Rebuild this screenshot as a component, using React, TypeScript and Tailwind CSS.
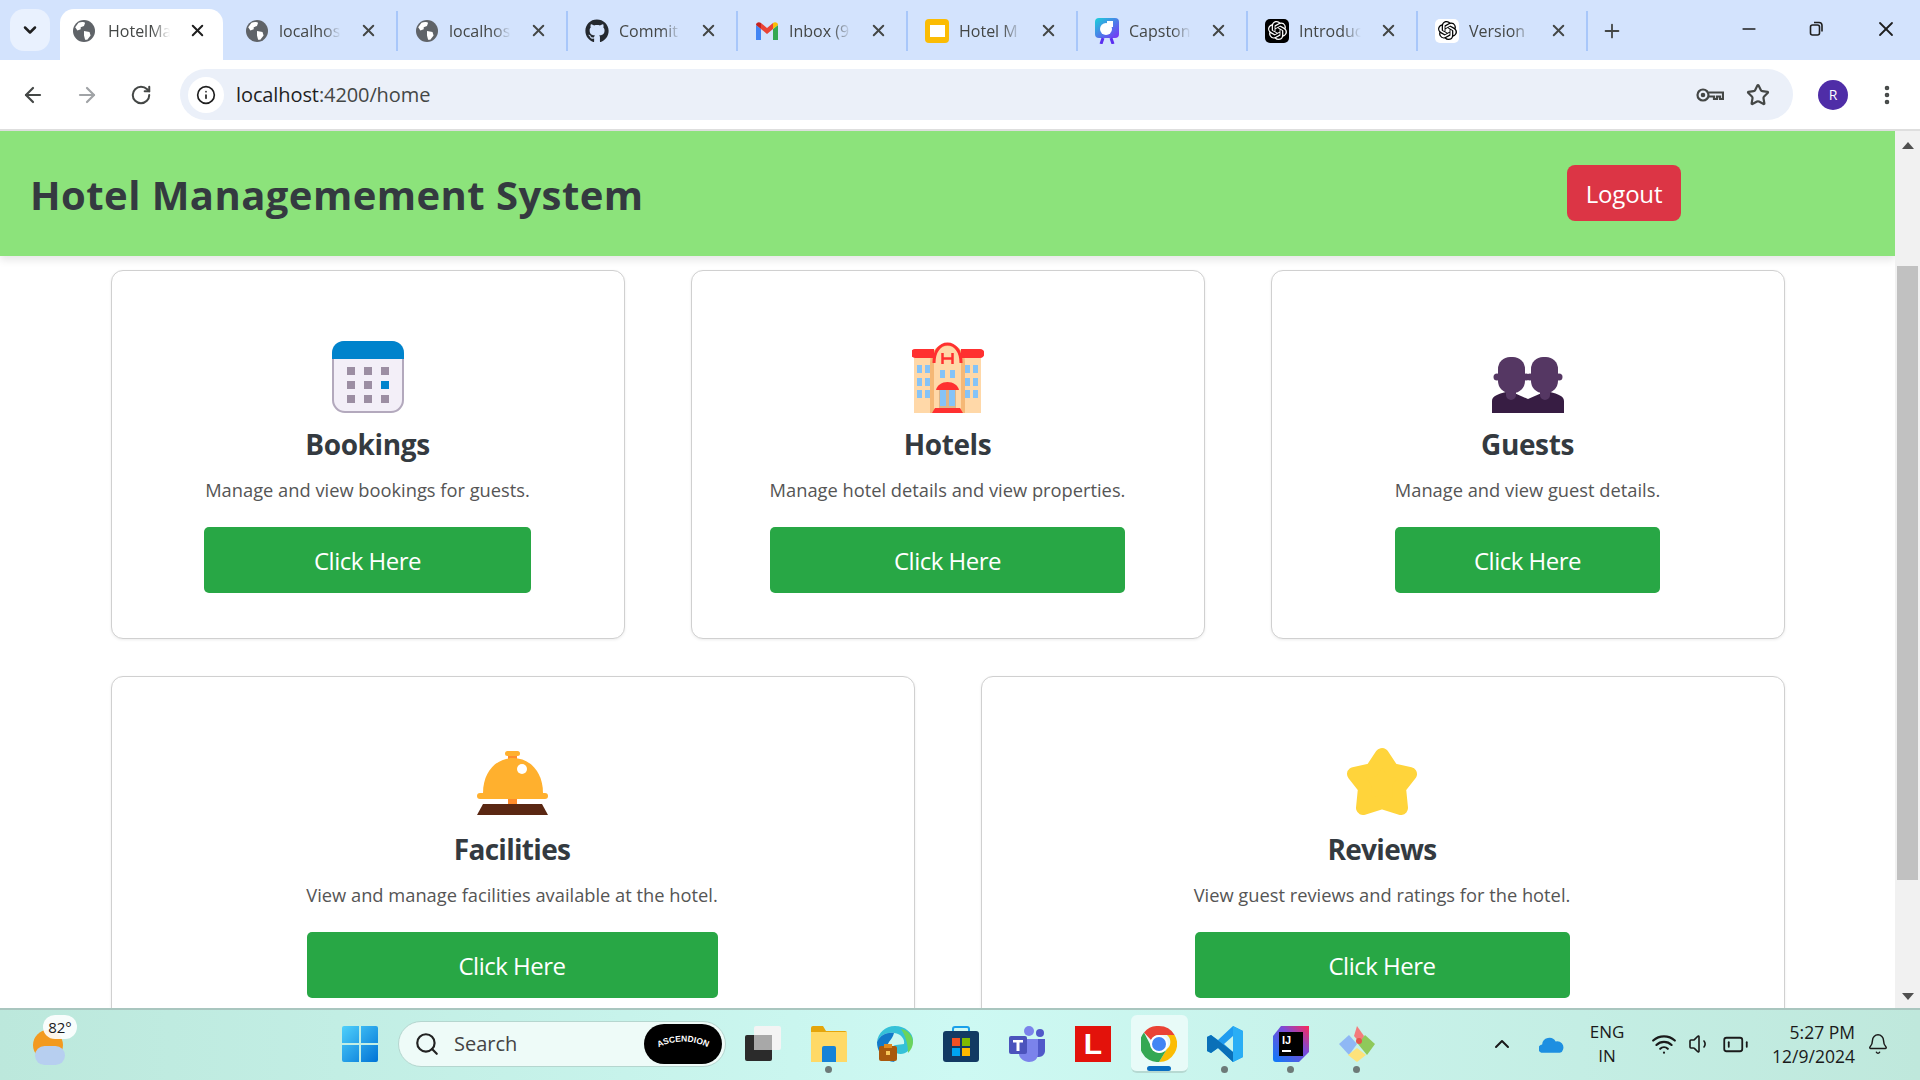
import { ChevronDown, ArrowLeft, ArrowRight, RotateCw, Info, Star, X, Plus, Minus, EllipsisVertical, ChevronUp, Bell, Search, Wifi, Volume1, BatteryLow } from 'lucide-react';
import { FaGithub } from 'react-icons/fa';
import { SiOpenai } from 'react-icons/si';

const FONT = "font-['Open_Sans','Noto_Sans',sans-serif]";

function Globe() {
  return (
    <svg viewBox="0 0 20 20" className="w-[22px] h-[22px]">
      <circle cx="10" cy="10" r="10" fill="#5f6368" />
      <path d="M5 2.5c2-1 5-1 6 0l-1 3-3 1v2l-3 1-2-3zM10 10l5 1 1 3-3 4h-2l-1-4z" fill="#fff" />
    </svg>
  );
}

function Gmail() {
  return (
    <svg viewBox="0 0 24 20" className="w-[24px] h-[20px]">
      <path d="M1 19V4l5 4v11z" fill="#4285f4" />
      <path d="M23 19V4l-5 4v11z" fill="#34a853" />
      <path d="M6 8V2l6 5 6-5v6l-6 5z" fill="#ea4335" />
      <path d="M1 4c0-2.5 3-3.500 5-2v6z" fill="#c5221f" />
      <path d="M23 4c0-2.500-3-3.500-5-2v6z" fill="#fbbc04" />
    </svg>
  );
}

function Slides() {
  return (
    <div className="w-[24px] h-[24px] rounded-[4px] bg-[#fbbc04] flex items-center justify-center">
      <div className="w-[15px] h-[12px] bg-white" />
    </div>
  );
}

function Capstone() {
  return (
    <svg viewBox="0 0 24 26" className="w-[24px] h-[26px]">
      <defs>
        <linearGradient id="cap" x1="0" y1="0" x2="1" y2="1">
          <stop offset="0" stopColor="#19d3d9" />
          <stop offset="1" stopColor="#7b2ff7" />
        </linearGradient>
      </defs>
      <rect x="0" y="0" width="24" height="20" rx="4" fill="url(#cap)" />
      <path d="M8 20l-2 6M16 20l2 6" stroke="#5b2ff0" strokeWidth="3" />
      <circle cx="11" cy="11" r="6" fill="#fff" />
      <path d="M12 3h6v6h-6z" fill="#fff" />
    </svg>
  );
}

function OpenAiTile({ dark }: { dark: boolean }) {
  return (
    <div className={dark ? 'w-[24px] h-[24px] rounded-[5px] bg-black flex items-center justify-center text-white' : 'w-[24px] h-[24px] rounded-[5px] bg-white flex items-center justify-center text-black'}>
      <SiOpenai className="w-[19px] h-[19px]" />
    </div>
  );
}

const TABS = [
  { title: 'HotelMa', icon: <Globe />, active: true },
  { title: 'localhos', icon: <Globe /> },
  { title: 'localhos', icon: <Globe /> },
  { title: 'Commit', icon: <FaGithub className="w-[24px] h-[24px] text-[#24292f]" /> },
  { title: 'Inbox (9', icon: <Gmail /> },
  { title: 'Hotel M', icon: <Slides /> },
  { title: 'Capston', icon: <Capstone /> },
  { title: 'Introduc', icon: <OpenAiTile dark /> },
  { title: 'Version', icon: <OpenAiTile dark={false} /> },
];

function TabStrip() {
  return (
    <div className="h-[60px] bg-[#d3e3fd] flex items-end shrink-0">
      <div className="w-[57px] h-[51px] self-start mt-[9px] shrink-0 pl-[10px]">
        <div className="w-[40px] h-[42px] rounded-[14px] bg-[#e9f1fe] flex items-center justify-center">
          <ChevronDown className="w-[20px] h-[20px] text-[#1f1f1f]" strokeWidth={3} />
        </div>
      </div>
      {TABS.map((t, i) => (
        <div key={i} className={t.active ? 'w-[172px] h-[51px] shrink-0 flex items-center pb-[8px]' : 'w-[170px] h-[51px] shrink-0 flex items-center pb-[8px]'}>
          <div className={t.active ? 'w-[163px] h-[51px] -mb-[8px] pb-[8px] ml-[3px] bg-white rounded-t-[14px] flex items-center pl-[12px]' : 'w-[169px] h-[40px] flex items-center pl-[16px] border-r-2 border-[#a8c7fa]'}>
            <div className="w-[24px] flex justify-center shrink-0">{t.icon}</div>
            <div className={t.active ? 'ml-[12px] w-[62px] text-[16px] whitespace-nowrap overflow-hidden text-[#444746] [mask-image:linear-gradient(90deg,#000_70%,transparent)]' : 'ml-[10px] w-[62px] text-[16px] whitespace-nowrap overflow-hidden text-[#444746] [mask-image:linear-gradient(90deg,#000_70%,transparent)]'}>{t.title}</div>
            <X className={t.active ? 'ml-[18px] w-[19px] h-[19px] text-[#1f1f1f]' : 'ml-[18px] w-[19px] h-[19px] text-[#444746]'} strokeWidth={2.5} />
          </div>
        </div>
      ))}
      <div className="h-[51px] flex items-center pb-[8px] ml-[12px]">
        <Plus className="w-[22px] h-[22px] text-[#444746]" strokeWidth={2} />
      </div>
      <div className="flex-1" />
      <div className="h-[60px] flex items-center text-[#1f1f1f] pb-[3px]">
        <Minus className="w-[20px] h-[20px]" strokeWidth={2} />
        <svg viewBox="0 0 16 16" className="w-[16px] h-[16px] ml-[49px]" fill="none" stroke="currentColor" strokeWidth="1.6">
          <rect x="2.500" y="4" width="9" height="10" rx="2" />
          <path d="M6 1.500h5c2 0 3 1 3 3v6" />
        </svg>
        <X className="w-[24px] h-[24px] ml-[50px] mr-[22px]" strokeWidth={1.8} />
      </div>
    </div>
  );
}

function KeyIcon() {
  return (
    <svg viewBox="0 0 28 16" className="w-[28px] h-[16px]" fill="none" stroke="#444746" strokeWidth="2.2">
      <circle cx="7" cy="8" r="5.500" />
      <circle cx="7" cy="8" r="1.200" fill="#444746" />
      <path d="M12.500 5.500H27v6.500h-3V9.500h-3V12h-3V9.500h-5.500" />
    </svg>
  );
}

function Toolbar() {
  return (
    <div className="h-[71px] bg-white shrink-0 border-b-2 border-[#dedede] flex items-center rounded-t-[8px]">
      <ArrowLeft className="ml-[21px] w-[24px] h-[24px] text-[#444746]" strokeWidth={2.2} />
      <ArrowRight className="ml-[30px] w-[24px] h-[24px] text-[#a0a3a6]" strokeWidth={2.2} />
      <RotateCw className="ml-[31px] w-[22px] h-[22px] text-[#444746]" strokeWidth={2.2} />
      <div className="ml-[28px] w-[1613px] h-[51px] rounded-full bg-[#ebf0f9] flex items-center pl-[8px]">
        <div className="w-[36px] h-[36px] rounded-full bg-white flex items-center justify-center">
          <Info className="w-[20px] h-[20px] text-[#1f1f1f]" strokeWidth={2} />
        </div>
        <div className="ml-[12px] text-[20px] text-[#1f1f1f] tracking-[-0.1px]">localhost<span className="text-[#444746]">:4200/home</span></div>
        <div className="flex-1" />
        <KeyIcon />
        <Star className="ml-[22px] w-[24px] h-[24px] text-[#444746] mr-[23px]" strokeWidth={2.2} />
      </div>
      <div className="ml-[25px] w-[30px] h-[30px] rounded-full bg-[#4f2da7] text-white text-[14px] flex items-center justify-center">R</div>
      <EllipsisVertical className="ml-[27px] w-[24px] h-[24px] text-[#444746]" strokeWidth={2.6} />
    </div>
  );
}

function CalendarIcon() {
  return (
    <svg viewBox="0 0 72 72" className="w-[72px] h-[72px]">
      <rect x="1" y="1" width="70" height="70" rx="12" fill="#f3eff8" stroke="#b3a9bd" strokeWidth="2" />
      <path d="M0 18V12C0 5 5 0 12 0h48c7 0 12 5 12 12v6z" fill="#0083cc" />
      {[26, 40, 54].map((y) => [15, 32, 49].map((x) => (
        <rect key={`${x}-${y}`} x={x} y={y} width="8" height="8" fill={x === 49 && y === 40 ? '#0083cc' : '#9c8ea3'} />
      )))}
    </svg>
  );
}

function HotelIcon() {
  const win = [24, 37, 49];
  return (
    <svg viewBox="0 0 72 72" className="w-[72px] h-[72px]">
      <rect x="2" y="12" width="20" height="60" fill="#ffd8a8" />
      <rect x="49" y="12" width="20" height="60" fill="#ffd8a8" />
      <path d="M18 72V22C18 10 26 3 35.500 3S53 10 53 22v50z" fill="#f5b876" />
      <path d="M22 72V22C22 12 28 5 35.500 5S49 12 49 22v50z" fill="#ffd8a8" />
      <path d="M22 22C22 10 28 3 35.500 3S49 10 49 22" fill="none" stroke="#ff3030" strokeWidth="3" />
      <path d="M3 17a4 4 0 0 1 0-9h19v9zM49 8h19a4 4 0 0 1 0 9H49z" fill="#ff3030" />
      <path d="M30.500 12v11M40.500 12v11M30.500 17.500h10" stroke="#ff3030" strokeWidth="2.500" fill="none" />
      {win.map((y) => [5, 13, 53, 61].map((x) => <rect key={`${x}-${y}`} x={x} y={y} width="5" height="8" fill="#85c3f7" />))}
      <rect x="28" y="29" width="5" height="8" fill="#85c3f7" />
      <rect x="38" y="29" width="5" height="8" fill="#85c3f7" />
      <rect x="27" y="48" width="17" height="19" fill="#dcb58a" />
      <rect x="28" y="49" width="6" height="16" fill="#85c3f7" />
      <rect x="37" y="49" width="6" height="16" fill="#85c3f7" />
      <path d="M24 49c1-5 6-8 11.500-8s10.500 3 11.500 8z" fill="#ff3030" />
      <path d="M20 72l3-5h25l3 5z" fill="#ff3030" />
    </svg>
  );
}

function GuestsIcon() {
  return (
    <svg viewBox="0 0 72 72" className="w-[72px] h-[72px]">
      <path d="M0 72V60c0-5 6-7 14-9h6l16 7 16-7h6c8 2 14 4 14 9v12z" fill="#371d43" />
      <path d="M14 40h10v14a5 5 0 0 1-10 0zM48 40h10v14a5 5 0 0 1-10 0z" fill="#553763" />
      <circle cx="5" cy="36" r="3.500" fill="#553763" />
      <circle cx="34" cy="36" r="3.500" fill="#553763" />
      <circle cx="38" cy="36" r="3.500" fill="#553763" />
      <circle cx="67" cy="36" r="3.500" fill="#553763" />
      <rect x="6" y="16" width="27" height="36" rx="12" fill="#553763" />
      <rect x="39" y="16" width="27" height="36" rx="12" fill="#553763" />
    </svg>
  );
}

function BellIcon() {
  return (
    <svg viewBox="0 0 72 72" className="w-[72px] h-[72px]">
      <rect x="32" y="10" width="9" height="6" fill="#ff8c2b" />
      <rect x="29" y="7" width="15" height="5" rx="2.500" fill="#ffb02e" />
      <path d="M7 49C7 28 20 14 37 14s30 14 30 35z" fill="#ffb02e" />
      <rect x="1" y="49" width="71" height="6" rx="3" fill="#ffb02e" />
      <circle cx="46" cy="25" r="5" fill="#fff" />
      <rect x="32" y="55" width="9" height="6" fill="#ff8c2b" />
      <path d="M7 60h59l6 11H1z" fill="#5a2712" />
    </svg>
  );
}

function StarIcon() {
  return (
    <svg viewBox="0 0 72 72" className="w-[72px] h-[72px]">
      <polygon points="36,11 46,26 64,30 53,44 55,64 36,58 17,64 19,44 8,30 26,26" fill="#ffd43b" stroke="#ffd43b" strokeWidth="14" strokeLinejoin="round" />
    </svg>
  );
}

const ROW_ONE = [
  { title: 'Bookings', text: 'Manage and view bookings for guests.', icon: <CalendarIcon />, inner: 'w-[327px]' },
  { title: 'Hotels', text: 'Manage hotel details and view properties.', icon: <HotelIcon />, inner: 'w-[355px]' },
  { title: 'Guests', text: 'Manage and view guest details.', icon: <GuestsIcon />, inner: 'w-[265px]' },
];

const ROW_TWO = [
  { title: 'Facilities', text: 'View and manage facilities available at the hotel.', icon: <BellIcon />, inner: 'w-[411px]' },
  { title: 'Reviews', text: 'View guest reviews and ratings for the hotel.', icon: <StarIcon />, inner: 'w-[375px]' },
];

type CardData = { title: string; text: string; icon: React.ReactNode; inner: string };

function Card({ card, lower }: { card: CardData; lower?: boolean }) {
  return (
    <div className={lower ? 'flex-1 h-[369px] shrink-0 bg-white border border-[#d0d0d0] rounded-[12px] shadow-[0_1px_3px_rgba(0,0,0,0.08)] flex flex-col items-center pt-[67px] pr-[2px]' : 'flex-1 h-[369px] shrink-0 bg-white border border-[#d0d0d0] rounded-[12px] shadow-[0_1px_3px_rgba(0,0,0,0.08)] flex flex-col items-center pt-[70px] pr-[1px]'}>
      <div className="h-[72px]">{card.icon}</div>
      <div className={lower ? 'mt-[13px] h-[40px] text-[28px] leading-[40px] font-bold text-[#343a40] tracking-[-0.7px]' : 'mt-[11px] h-[40px] text-[28px] leading-[40px] font-bold text-[#343a40] tracking-[-0.4px]'}>{card.title}</div>
      <div className="mt-[12px] h-[28px] text-[18.3px] leading-[28px] text-[#555] whitespace-nowrap">{card.text}</div>
      <button className={`${card.inner} mt-[23px] h-[66px] pt-[2px] rounded-[5px] bg-[#28a745] text-white text-[24px] tracking-[-0.5px]`}>Click Here</button>
    </div>
  );
}

function Scrollbar() {
  return (
    <div className="w-[25px] shrink-0 bg-[#f1f1f1] flex flex-col items-center">
      <svg viewBox="0 0 12 7" className="w-[12px] h-[7px] mt-[11px] shrink-0"><path d="M6 0l6 7H0z" fill="#505050" /></svg>
      <div className="mt-[117px] w-[21px] h-[614px] bg-[#c1c1c1]" />
      <div className="flex-1" />
      <svg viewBox="0 0 12 7" className="w-[12px] h-[7px] mb-[8px] shrink-0"><path d="M6 7l6-7H0z" fill="#505050" /></svg>
    </div>
  );
}

function Page() {
  return (
    <div className="flex-1 min-h-0 flex overflow-hidden bg-white">
      <div className="flex-1 min-w-0 overflow-hidden">
        <header className="h-[125px] bg-[#8ce37b] shadow-[0_4px_8px_rgba(0,0,0,0.1)] flex items-center pl-[30px]">
          <h1 className="mt-[2px] text-[40px] font-bold text-[#343a40] tracking-[0.45px]">Hotel Managemement System</h1>
          <div className="flex-1" />
          <button className="mr-[214px] -mt-[2px] w-[114px] h-[56px] pt-[2px] rounded-[8px] bg-[#dc3545] text-white text-[24px] tracking-[-0.2px]">Logout</button>
        </header>
        <div className="pl-[111px] pr-[110px] pt-[14px] flex flex-col gap-[37px]">
          <div className="flex gap-[66px]">
            {ROW_ONE.map((c) => <Card key={c.title} card={c} />)}
          </div>
          <div className="flex gap-[66px]">
            {ROW_TWO.map((c) => <Card key={c.title} card={c} lower />)}
          </div>
        </div>
      </div>
      <Scrollbar />
    </div>
  );
}

function WinLogo() {
  return (
    <svg viewBox="0 0 36 36" className="w-[36px] h-[36px]">
      <defs>
        <linearGradient id="win" x1="0" y1="0" x2="1" y2="1">
          <stop offset="0" stopColor="#4fd0fb" />
          <stop offset="1" stopColor="#0073d6" />
        </linearGradient>
      </defs>
      <path d="M0 2a2 2 0 0 1 2-2h15v17H0zM19 0h15a2 2 0 0 1 2 2v15H19zM0 19h17v17H2a2 2 0 0 1-2-2zM19 19h17v15a2 2 0 0 1-2 2H19z" fill="url(#win)" />
    </svg>
  );
}

function TaskView() {
  return (
    <svg viewBox="0 0 36 36" className="w-[36px] h-[36px]">
      <rect x="9" y="0" width="27" height="24" rx="2" fill="#f4f4f4" />
      <rect x="0" y="9" width="27" height="26" rx="2" fill="#2b2b2b" />
      <rect x="9" y="9" width="18" height="15" fill="#a8a8a8" />
    </svg>
  );
}

function Explorer() {
  return (
    <svg viewBox="0 0 36 36" className="w-[36px] h-[36px]">
      <path d="M0 2a2 2 0 0 1 2-2h10l3 5h19a2 2 0 0 1 2 2v4H0z" fill="#e5a50a" />
      <rect x="0" y="6" width="36" height="30" fill="#ffd966" />
      <path d="M11 22a2 2 0 0 1 2-2h10a2 2 0 0 1 2 2v14H11z" fill="#1683d8" />
    </svg>
  );
}

function Edge() {
  return (
    <svg viewBox="0 0 36 36" className="w-[36px] h-[36px]">
      <path d="M18 0C8 0 1 7 0 16c3-7 10-10 17-9 8 1 11 7 10 11l-8 1c-3 0-4 3-3 5 2 4 10 6 15 1 3-3 5-7 5-11C36 7 28 0 18 0z" fill="#35c1d8" />
      <path d="M24 3c7 1 12 7 12 13 0 4-2 8-5 11 0-6-1-15-7-24z" fill="#6bd45c" />
      <path d="M0 16c0 8 4 14 10 18 3 1 5 2 8 2-9-6-10-14-6-20 2-3 4-5 5-9-7-1-14 2-17 9z" fill="#1279c9" />
      <rect x="2" y="20" width="18" height="15" rx="2" fill="#a8590e" />
      <rect x="7" y="18" width="8" height="4" fill="#e08a1e" />
      <rect x="9" y="25" width="4" height="4" fill="#f7c65a" />
    </svg>
  );
}

function Store() {
  return (
    <svg viewBox="0 0 36 36" className="w-[36px] h-[36px]">
      <path d="M10 6V3a2 2 0 0 1 2-2h12a2 2 0 0 1 2 2v3" fill="none" stroke="#1aa0ea" strokeWidth="2" />
      <rect x="0" y="5" width="36" height="31" rx="3" fill="#123a63" />
      <rect x="9" y="12" width="8" height="8" fill="#f25022" />
      <rect x="19" y="12" width="8" height="8" fill="#7fba00" />
      <rect x="9" y="22" width="8" height="8" fill="#00a4ef" />
      <rect x="19" y="22" width="8" height="8" fill="#ffb900" />
    </svg>
  );
}

function Teams() {
  return (
    <svg viewBox="0 0 36 36" className="w-[36px] h-[36px]">
      <circle cx="20" cy="5" r="5" fill="#7b83eb" />
      <circle cx="31" cy="7" r="4" fill="#5059c9" />
      <path d="M25 13h11v12c0 3-3 6-6 6h-5z" fill="#5059c9" />
      <path d="M10 13h19v15c0 5-4 8-9 8s-10-4-10-8z" fill="#7b83eb" />
      <rect x="0" y="10" width="18" height="18" rx="2" fill="#4b53bc" />
      <path d="M4 14h10v2.500h-3.500V25h-3v-8.500H4z" fill="#fff" />
    </svg>
  );
}

function Lenovo() {
  return (
    <div className="w-[36px] h-[36px] bg-[#e3120b] text-white text-[30px] leading-[36px] font-bold text-center font-['Liberation_Sans',sans-serif]">L</div>
  );
}

function Chrome() {
  return (
    <svg viewBox="0 0 36 36" className="w-[36px] h-[36px]">
      <path d="M18 0a18 18 0 0 1 15.600 9H18a9 9 0 0 0-8 5L3 6.500A18 18 0 0 1 18 0z" fill="#ea4335" />
      <path d="M33.600 9A18 18 0 0 1 18 36l8-13a9 9 0 0 0 0-14z" fill="#fbbc04" />
      <path d="M18 36A18 18 0 0 1 3 6.500L10 20a9 9 0 0 0 16 3z" fill="#34a853" />
      <circle cx="18" cy="18" r="9" fill="#fff" />
      <circle cx="18" cy="18" r="7" fill="#4285f4" />
    </svg>
  );
}

function VsCode() {
  return (
    <svg viewBox="0 0 36 36" className="w-[36px] h-[36px]">
      <path d="M26 0l10 5v26l-10 5-15-14-7 5-4-2V11l4-2 7 5zM26 10l-9 8 9 8z" fill="#1f9cf0" />
      <path d="M26 0l10 5v26l-10 5z" fill="#2aaef5" />
      <path d="M0 11l4-2 22 17v10L11 22l-7 5-4-2z" fill="#0a70b8" />
    </svg>
  );
}

function IntelliJ() {
  return (
    <svg viewBox="0 0 36 36" className="w-[36px] h-[36px]">
      <defs>
        <linearGradient id="ij" x1="0" y1="1" x2="1" y2="0">
          <stop offset="0" stopColor="#087cfa" />
          <stop offset="0.6" stopColor="#7b4bd8" />
          <stop offset="1" stopColor="#fe2857" />
        </linearGradient>
      </defs>
      <path d="M8 0h28v26l-10 10H3a3 3 0 0 1-3-3V10z" fill="url(#ij)" />
      <rect x="6" y="6" width="24" height="24" fill="#000" />
      <rect x="9" y="24" width="9" height="2" fill="#fff" />
      <text x="9" y="18" fill="#fff" fontSize="11" fontWeight="700" fontFamily="Liberation Sans">IJ</text>
    </svg>
  );
}

function Diamonds() {
  return (
    <svg viewBox="0 0 36 36" className="w-[36px] h-[36px]">
      <path d="M18 0l7 10-3 8-7-8z" fill="#f47c7c" />
      <path d="M26 9l10 9-8 11-9-11z" fill="#8fc95a" />
      <path d="M10 9l8 9-8 11-10-11z" fill="#8fb8f5" />
      <path d="M18 22l9 7-9 7-9-7z" fill="#fde27a" />
      <circle cx="20" cy="15" r="3" fill="#e2574c" />
    </svg>
  );
}

function AscendionBadge() {
  return (
    <svg viewBox="0 0 78 40" className="w-[78px] h-[40px]">
      <rect x="0" y="0" width="78" height="40" rx="20" fill="#000" />
      <path id="arc" d="M11 25Q39 10 67 25" fill="none" />
      <text fill="#fff" fontSize="8.500" fontWeight="700" fontFamily="Liberation Sans" textAnchor="middle">
        <textPath href="#arc" startOffset="50%">ASCENDION</textPath>
      </text>
    </svg>
  );
}

const TASK_APPS = [
  { icon: <TaskView /> },
  { icon: <Explorer />, dot: true },
  { icon: <Edge /> },
  { icon: <Store /> },
  { icon: <Teams /> },
  { icon: <Lenovo /> },
  { icon: <Chrome />, active: true },
  { icon: <VsCode />, dot: true },
  { icon: <IntelliJ />, dot: true },
  { icon: <Diamonds />, dot: true },
];

function Taskbar() {
  return (
    <div className="h-[72px] shrink-0 border-t-2 border-[#a9c6bf] bg-gradient-to-r from-[#bce8dc] via-[#cdf9f3] to-[#bfe8dc] flex items-center pb-[2px]">
      <div className="relative ml-[33px] w-[33px] h-[34px] mt-[6px]">
        <div className="w-[30px] h-[30px] rounded-full bg-[#f39a1f]" />
        <div className="absolute left-[2px] top-[16px] w-[30px] h-[19px] rounded-full bg-[#b7cff0]" />
        <div className="absolute left-[10px] -top-[15px] w-[34px] h-[24px] rounded-[12px] bg-white/90 text-[15px] leading-[24px] text-center text-[#1a1a1a]">82°</div>
      </div>
      <div className="ml-[276px]"><WinLogo /></div>
      <div className="ml-[20px] w-[328px] h-[46px] rounded-full bg-[#eefbf8] border border-[#b5d6cf] flex items-center pl-[15px] pr-[3px]">
        <Search className="w-[26px] h-[26px] text-[#222]" strokeWidth={2} />
        <div className="ml-[14px] text-[20px] text-[#444]">Search</div>
        <div className="flex-1" />
        <AscendionBadge />
      </div>
      <div className="ml-[4px] flex">
        {TASK_APPS.map((a, i) => (
          <div key={i} className="relative w-[66px] h-[58px] flex items-center justify-center">
            {a.active && <div className="absolute left-[5px] top-0 w-[57px] h-[58px] rounded-[6px] bg-[#e8fbf8] border-b-2 border-[#b6d9d2]" />}
            <div className="relative">{a.icon}</div>
            {a.dot && <div className="absolute left-[29px] bottom-[0px] w-[7px] h-[7px] rounded-full bg-[#6d7a78]" />}
            {a.active && <div className="absolute left-[21px] bottom-[2px] w-[24px] h-[5px] rounded-full bg-[#0a6fc2]" />}
          </div>
        ))}
      </div>
      <div className="flex-1" />
      <ChevronUp className="w-[24px] h-[24px] text-[#1a1a1a]" strokeWidth={2} />
      <svg viewBox="0 0 24 16" className="ml-[25px] w-[25px] h-[17px]">
        <path d="M4 16a4 4 0 0 1-1-8 7 7 0 0 1 13-3 6 6 0 0 1 7 8 4 4 0 0 1-3 3z" fill="#1d8fe1" />
      </svg>
      <div className="ml-[21px] w-[44px] text-center text-[17px] leading-[24px] text-[#1a1a1a]">ENG<br />IN</div>
      <Wifi className="ml-[22px] w-[26px] h-[26px] text-[#1a1a1a]" strokeWidth={2} />
      <Volume1 className="ml-[11px] w-[24px] h-[24px] text-[#1a1a1a]" strokeWidth={1.6} />
      <BatteryLow className="ml-[10px] w-[27px] h-[27px] text-[#1a1a1a]" strokeWidth={1.6} />
      <div className="ml-[18px] w-[88px] text-right text-[17.5px] leading-[24px] text-[#1a1a1a] whitespace-nowrap">5:27 PM<br />12/9/2024</div>
      <Bell className="ml-[12px] mr-[31px] w-[22px] h-[24px] text-[#1a1a1a]" strokeWidth={1.6} />
    </div>
  );
}

export default function App() {
  return (
    <div className={`${FONT} w-[1920px] h-[1080px] flex flex-col overflow-hidden`}>
      <TabStrip />
      <Toolbar />
      <Page />
      <Taskbar />
    </div>
  );
}
